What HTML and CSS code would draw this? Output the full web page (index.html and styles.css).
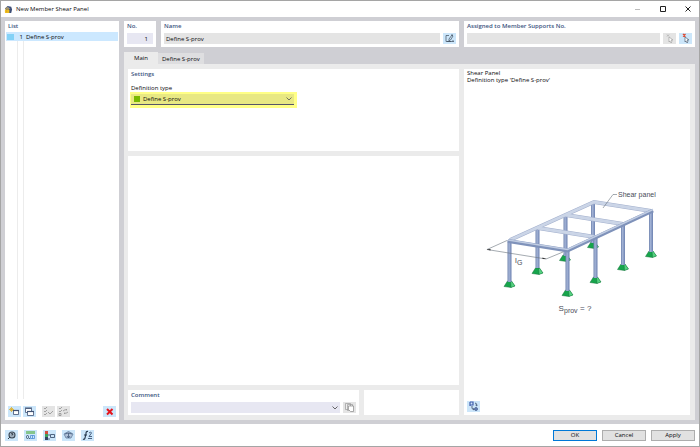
FILE: index.html
```
<!DOCTYPE html>
<html lang="en">
<head>
<meta charset="utf-8">
<title>New Member Shear Panel</title>
<link rel="stylesheet" href="styles.css">
</head>
<body>
<div class="window">
  <header class="titlebar">
    <svg class="logo" viewBox="0 0 10 10"><path d="M1 4 4 1l4 1 1 3-1 4H6L3 6z" fill="#3e4f78"/><path d="m1 4 3-2 3 2-3 1z" fill="#8590ae"/><rect x="1" y="5" width="5" height="4" rx="1" fill="#eebd20"/><path d="M2 5V4q1-2 3 0v1M3 6v2" fill="none" stroke="#cf9a11" stroke-width=".8"/></svg>
    <h1>New Member Shear Panel</h1>
    <div class="controls">
      <button class="ctl" aria-label="Minimize"><svg viewBox="0 0 8 8"><path d="M1 4.5h5" stroke="#bbb" fill="none"/></svg></button>
      <button class="ctl" aria-label="Maximize"><svg viewBox="0 0 8 8"><path d="M1.5 1.5h5v5h-5z" stroke="#222" fill="none"/></svg></button>
      <button class="ctl" aria-label="Close"><svg viewBox="0 0 8 8"><path d="m1.500 1.500 5 5m0-5-5 5" stroke="#222" fill="none"/></svg></button>
    </div>
  </header>
  <main class="body">
    <aside class="list card">
      <h2>List</h2>
      <div class="rows">
        <div class="row"><span class="swatch"></span><span class="num">1</span><span>Define S-prov</span></div>
        <div class="rails"></div>
      </div>
      <div class="tools">
        <button class="tool" aria-label="New"><svg viewBox="0 0 13 11"><path d="M5.500 4.500h5v4h-5z" fill="#fff" stroke="#405274" stroke-width=".8"/><path d="M5 4.500h6" stroke="#405274" stroke-width="1.200"/><path d="M3.500 1v5M1 3.500h5M2 2l3 3m0-3L2 5" stroke="#dcaf29" stroke-width=".8"/></svg></button>
        <button class="tool" aria-label="Copy"><svg viewBox="0 0 13 11"><path d="M2.500 2.500h6v4h-6z" fill="#fff" stroke="#405274" stroke-width=".8"/><path d="M2 2h7" stroke="#405274"/><path d="M4.500 5.500h6v4h-6z" fill="#fff" stroke="#405274" stroke-width=".8"/><path d="M4 5.500h7" stroke="#405274" stroke-width="1.200"/></svg></button>
        <button class="tool off gap" aria-label="Select all" disabled><svg viewBox="0 0 13 11"><path d="m2 2 1 1 2-2M2 5l1 1 2-2M2 8l1 1 2-2M6 6l2 2 3-3" stroke="#909090" stroke-width=".8" fill="none"/></svg></button>
        <button class="tool off" aria-label="Invert selection" disabled><svg viewBox="0 0 13 11"><path d="m2 2 1 1 2-2M2 5l1 1 2-2M2 7.500h2v2H2zM6 5q2-2 4-1l-1-1m2 3q-2 2-4 1l1 1" stroke="#909090" stroke-width=".8" fill="none"/></svg></button>
        <button class="tool end" aria-label="Delete"><svg viewBox="0 0 13 11"><path d="m4 3 5.500 5.500m0-5.500L4 8.500" stroke="#e5161d" stroke-width="2" fill="none"/></svg></button>
      </div>
    </aside>
    <section class="detail">
      <div class="top">
        <div class="card field"><label for="no">No.</label><div class="line"><input id="no" class="no" value="1"></div></div>
        <div class="card field"><label for="name">Name</label><div class="line"><input id="name" class="gray" value="Define S-prov">
          <button class="tool" aria-label="Edit name"><svg viewBox="0 0 13 11"><path d="M6 2.500H3v6h7V7M10 8.500h1M4 8.500h4M8 2l2 0M9 2 6 6v2l1.500-1L10 3z" stroke="#3d4c5c" stroke-width=".7" fill="none"/></svg></button></div></div>
        <div class="card field"><label for="sup">Assigned to Member Supports No.</label><div class="line"><input id="sup" class="gray">
          <button class="tool off" aria-label="Deselect" disabled><svg viewBox="0 0 13 11"><path d="m6 4 0 5 1-1 1 2 1-1-1-2h2z" fill="#fff" stroke="#a1a1a1" stroke-width=".7"/><path d="m4 1.500 2 2m0-2-2 2" stroke="#aaa" stroke-width=".8"/></svg></button>
          <button class="tool" aria-label="Select in model"><svg viewBox="0 0 13 11"><path d="m6 4 0 5 1-1 1 2 1-1-1-2h2z" fill="#fff" stroke="#526175" stroke-width=".7"/><path d="m4 1 2.500 2.500m0-2.500L4 3.500" stroke="#de4a32" stroke-width="1.300"/></svg></button></div></div>
      </div>
      <nav class="tabs"><button class="tab active">Main</button><button class="tab">Define S-prov</button></nav>
      <div class="pane">
        <section class="card settings">
          <h2>Settings</h2>
          <label for="type">Definition type</label>
          <div class="mark"><span class="green"></span><select id="type"><option>Define S-prov</option></select><svg class="chev" viewBox="0 0 6 4"><path d="m.5.500 2.500 2.500L5.500.500" fill="none" stroke="#555" stroke-width=".8"/></svg></div>
        </section>
        <section class="card blank"></section>
        <section class="card comment">
          <label for="comment">Comment</label>
          <div class="line"><div class="combo"><select id="comment"><option></option></select><svg class="chev" viewBox="0 0 6 4"><path d="m.5.500 2.500 2.500L5.500.500" fill="none" stroke="#444" stroke-width=".8"/></svg></div>
          <button class="tool off" aria-label="Comment library" disabled><svg viewBox="0 0 13 11"><path d="M2.500 1.500h5v6h-5zM4.500 2.500h5v6h-5z" fill="#eee" stroke="#999" stroke-width=".7"/><path d="M5.500 4h5v5.500h-3l-2-2z" fill="#fff" stroke="#888" stroke-width=".7"/></svg></button></div>
        </section>
        <section class="card spare"></section>
        <section class="card preview">
          <p>Shear Panel<br>Definition type 'Define S-prov'</p>
          <svg class="model" viewBox="464 188 226 132" role="img" aria-label="Shear panel model">
            <defs>
              <linearGradient id="col"><stop stop-color="#6f83ad"/><stop offset=".4" stop-color="#a3b3d6"/><stop offset="1" stop-color="#6c81b0"/></linearGradient>
              <g id="foot"><path d="m-2-3h4l3.500 5-4 1.500-7-1z" fill="#16a54b"/><path d="m1-3 1 0 3.500 5-4 1.500z" fill="#56d281"/><path d="m-2-3h4l3.500 5-4 1.500-7-1zM1-3l.5 6.500" fill="none" stroke="#14703a" stroke-width=".5"/></g>
            </defs>
            <use href="#foot" x="593" y="246"/><use href="#foot" x="565" y="259"/><use href="#foot" x="537.500" y="272"/>
            <g fill="url(#col)"><path d="M591 204h4v40h-4z"/><path d="M563.500 217h4v40h-4z"/><path d="M535.500 230h4v39h-4z"/></g>
            <g fill="none" stroke-width="4" stroke="#a3b0cd"><path d="m510 241 84-38 57 9M538 229l57 9M566 216l57 9"/></g>
            <g fill="none" stroke-width="2.800" stroke="#cbd5e7"><path d="m510 241 84-38 57 9M538 229l57 9M566 216l57 9"/></g>
            <use href="#foot" x="651" y="255"/><use href="#foot" x="623" y="268"/><use href="#foot" x="595.500" y="281"/><use href="#foot" x="567.500" y="294"/><use href="#foot" x="509.500" y="285"/>
            <g fill="url(#col)"><path d="M649 212h4v41h-4z"/><path d="M621 226h4v40h-4z"/><path d="M593.500 239h4v40h-4z"/><path d="M565.500 251h4v41h-4z"/><path d="M507.500 241h4v42h-4z"/></g>
            <path d="m508 242 59.500 9.500 85.500-40" fill="none" stroke="#7f92ba" stroke-width="4"/>
            <path d="m508 241 59.500 9.500 85.500-40" fill="none" stroke="#c0cce2" stroke-width="1.500"/>
            <path d="m487 250.500 59 9.500m-59-9.500 20-9M546 260l17-7M603 209l10-13.500h4" fill="none" stroke="#68727c" stroke-width=".6"/>
            <path d="m486.500 250.500 4-.5v1.500zM546.500 260l-4-1.500v1.500z" fill="#333"/>
            <g class="caption"><text x="618" y="198">Shear panel</text><text class="main" x="515" y="264">l</text><text x="517" y="266">G</text><text class="main" x="558.500" y="312">S</text><text x="564" y="314">prov</text><text class="main" x="580" y="312">= ?</text></g>
          </svg>
          <button class="tool" aria-label="Toggle view"><svg viewBox="0 0 13 11"><path d="M3 1v4M3 1h3v3H3" fill="none" stroke="#405eac" stroke-width="1.200"/><path d="M8 2q2 0 2 3L8.500 4M5 5q-1 3 2 4L6 7" fill="none" stroke="#506580"/><circle cx="9" cy="8" r="1.500" fill="#6b86bd" stroke="#354f82" stroke-width=".7"/></svg></button>
        </section>
      </div>
    </section>
  </main>
  <footer class="footer">
    <button class="tool" aria-label="Help"><svg viewBox="0 0 13 11"><circle cx="7" cy="5" r="3" fill="#a5b5c4" stroke="#3d4a57" stroke-width="1.100"/><path d="M5 7 3 9M6 4q1-1 2 0L7 5.500" fill="none" stroke="#303c47"/></svg></button>
    <button class="tool" aria-label="Units"><svg viewBox="0 0 13 11"><path d="M2 1h9v3H2z" fill="#85c58c"/><rect x="2.500" y="5.500" width="2" height="3" rx="1" fill="none" stroke="#284059" stroke-width=".8"/><path d="M5.500 8v1" stroke="#284059" stroke-width=".8"/><path d="M6.500 5.500h4v3h-4zM8.500 5.500v3" fill="none" stroke="#4b8bd3" stroke-width=".8"/></svg></button>
    <button class="tool" aria-label="Display"><svg viewBox="0 0 13 11"><path d="M2 1h3v3H2z" fill="#d14b3c"/><path d="M2 4h3v3H2z" fill="#3ca05a"/><path d="M2 7h3v3H2z" fill="#314463"/><path d="M5 5h2M5 9h2M7.500 4.500h4v3h-4z" fill="none" stroke="#314463" stroke-width=".8"/></svg></button>
    <button class="tool" aria-label="View"><svg viewBox="0 0 13 11"><path d="m2 4 4.500-2.500L11 4 9 8H4z" fill="#b3c5dc" stroke="#607999" stroke-width=".8"/><path d="M6.500 3v5M5 6l1.500 2L8 6M3 4q3-2 7 0" stroke="#415979" stroke-width=".8" fill="none"/></svg></button>
    <button class="tool" aria-label="Formula"><svg viewBox="0 0 13 11"><path d="M7 1.500q-2-.5-2 2L4 8q-.5 2-2 1M3 5h3" fill="none" stroke="#26384d" stroke-width="1.100"/><path d="M8 3q2-2 2.500 0L8 6.500h3M7 8.500h4" fill="none" stroke="#3b5475" stroke-width=".9"/></svg></button>
    <div class="actions"><button class="push primary">OK</button><button class="push">Cancel</button><button class="push">Apply</button></div>
  </footer>
</div>
</body>
</html>
```
FILE: styles.css
```
* { box-sizing: border-box; }
body {
  margin: 0;
  font: 6px/8px "Open Sans", "Noto Sans", sans-serif;
  color: #08080c;
}
button, input, select { font: inherit; color: inherit; margin: 0; padding: 0; border: 0; border-radius: 0; }
h1, h2, p { margin: 0; font: inherit; }
svg { display: block; }

.window {
  min-height: 100vh;
  display: flex;
  flex-direction: column;
  border: 1px solid #a5a5a5;
  background: #fff;
}
.titlebar { height: 16px; display: flex; align-items: center; gap: 3px; padding-left: 3px; }
.titlebar h1 { font-size: 6px; }
.logo { width: 9px; height: 9px; }
.controls { margin-left: auto; display: flex; gap: 17px; padding-right: 7px; }
.ctl { width: 8px; height: 8px; background: none; }

.body {
  flex: 1;
  display: grid;
  grid-template-columns: 114px 1fr;
  gap: 5px;
  padding: 4px;
  background: #cfcfd4;
}
.card { background: #fff; padding: 1px 3px 3px; min-width: 0; }
.card h2, .field label, .comment label { display: block; color: #3c5580; font-weight: 600; }
.list { display: flex; flex-direction: column; padding: 1px 0 3px; }
.list h2 { padding-left: 3px; }
.rows { flex: 1; display: flex; flex-direction: column; margin: 2px 1px 7px; }
.row { height: 9px; display: flex; align-items: center; background: #cce8ff; }
.swatch { width: 7px; height: 6px; margin-left: 1px; background: #84d2f7; }
.num { width: 9px; margin-right: 3px; text-align: right; }
.rails { flex: 1; width: 7px; margin-left: 11px; border: solid #ececec; border-width: 0 1px; }
.tools { display: flex; gap: 2px; padding: 0 3px; }
.tool { flex: none; width: 13px; height: 11px; background: #cce6fa; }
.tool svg { width: 13px; height: 11px; }
.off { background: #e4e4e4; }
.gap { margin-left: 4px; }
.end { margin-left: auto; }

.detail { display: flex; flex-direction: column; min-width: 0; }
.top { display: grid; grid-template-columns: 32px 298fr 231fr; gap: 5px; }
.line { display: flex; gap: 3px; margin-top: 3px; }
.line input { flex: 1; min-width: 0; width: 0; height: 11px; padding: 0 2px; background: #e7e7f2; }
.line .gray { background: #e4e4e4; }
.line .no { text-align: right; padding-right: 5px; }
.tabs { display: flex; align-items: flex-end; margin-top: 5px; }
.tab { height: 11px; padding: 0 4px; background: #dedee0; }
.active { height: 12px; width: 34px; background: #ebebeb; }

.pane {
  flex: 1;
  display: grid;
  grid-template-columns: 231fr 95fr 226fr;
  grid-template-rows: 82px 1fr 25px;
  gap: 5px;
  padding: 5px 5px 5px 4px;
  background: #ebebeb;
}
.settings, .blank { grid-column: 1 / 3; }
.settings label { display: block; margin-top: 6px; }
.mark {
  position: relative;
  display: flex;
  width: 167px;
  height: 16px;
  margin: 0 -1px;
  padding: 2px 3px 3px 1px;
  background: #ffff86;
}
.mark select, .combo select { appearance: none; width: 100%; }
.mark select { height: 11px; padding-left: 12px; background: #e8e883; border-bottom: 1px solid #555568; }
.green { position: absolute; left: 4px; top: 4px; width: 6px; height: 6px; background: #79b900; }
.chev { position: absolute; right: 5px; top: 5px; width: 6px; height: 4px; }
.combo { position: relative; flex: 1; }
.combo select { display: block; height: 11px; background: #e7e7f2; }
.combo .chev { right: 2px; top: 4px; }
.preview {
  grid-column: 3;
  grid-row: 1 / 4;
  display: flex;
  flex-direction: column;
  justify-content: space-between;
}
.preview p { line-height: 7px; }
.model { width: calc(100% + 6px); margin: 20px -3px 0; }
.caption { font: 7px "Liberation Sans", sans-serif; fill: #484b58; }
.main { font-size: 8px; }

.footer { height: 22px; display: flex; align-items: center; gap: 6px; padding: 0 4px; }
.actions { display: flex; gap: 5px; margin-left: auto; }
.push { width: 44px; height: 11px; background: #e1e1e1; border: 1px solid #adadad; line-height: 8px; }
.primary { border-color: #0078d7; }
```
